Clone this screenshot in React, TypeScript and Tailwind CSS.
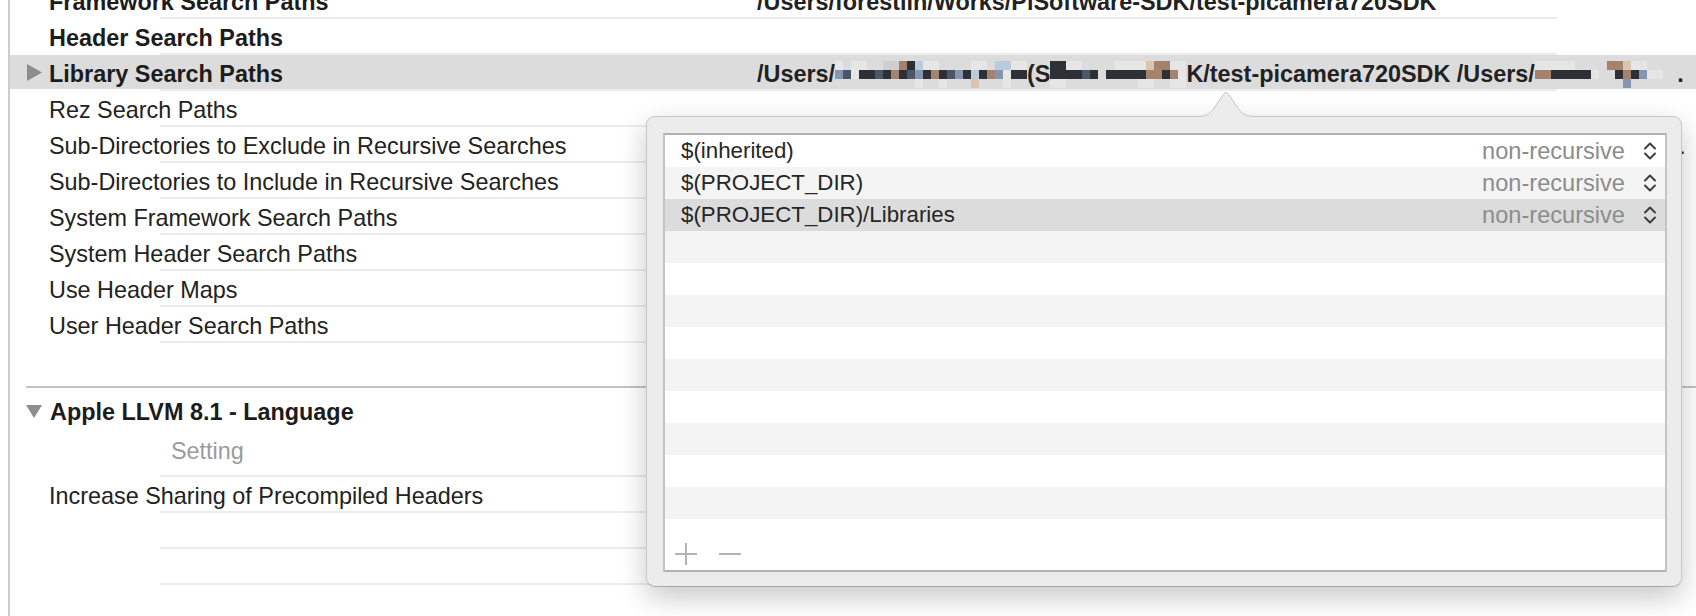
import React from "react";

const FONT = "font-['Liberation_Sans',Arial,sans-serif]";

// pixelated blur cells
const TONE: Record<string, string> = {
  d: "bg-[#2e3038]",
  n: "bg-[#4c5669]",
  b: "bg-[#8496b0]",
  s: "bg-[#bccbdb]",
  t: "bg-[#a4826c]",
  p: "bg-[#d8c6b0]",
  w: "bg-[#e6e6e6]",
  g: "bg-[#cfcfcf]",
  ".": "bg-transparent",
};

const Mosaic = ({ rows }: { rows: string[] }) => (
  <span className="flex flex-col">
    {rows.map((r, i) => (
      <span key={i} className="flex">
        {r.split("").map((c, j) => (
          <span key={j} className={`h-[9px] w-[8px] ${TONE[c]}`} />
        ))}
      </span>
    ))}
  </span>
);

const TriRight = () => (
  <svg width="15" height="17" viewBox="0 0 15 17">
    <polygon points="0,0 15,8.5 0,17" fill="#8d8d8d" />
  </svg>
);

const TriDown = () => (
  <svg width="16" height="13" viewBox="0 0 16 13">
    <polygon points="0,0 16,0 8,13" fill="#8d8d8d" />
  </svg>
);

const Line = () => <div className="ml-[150px] h-[2px] w-[1397px] bg-[#ececec]" />;

type RowProps = {
  label?: string;
  bold?: boolean;
  arrow?: boolean;
  selected?: boolean;
  value?: React.ReactNode;
};

const Row = ({ label = "", bold, arrow, selected, value }: RowProps) => (
  <div>
    <div className={`flex h-[34px] items-center pt-[4px] ${selected ? "bg-[#dcdcdc]" : ""}`}>
      <div className="flex w-[747px] shrink-0 items-center pl-[17px]">
        <span className="mr-[7px] flex w-[15px] -translate-y-[2px]">{arrow && <TriRight />}</span>
        <span className={bold ? "font-bold text-[#1c1c1c]" : ""}>{label}</span>
      </div>
      <div className="min-w-0 flex-1 overflow-hidden whitespace-nowrap">{value}</div>
    </div>
    <Line />
  </div>
);

const Stepper = () => (
  <svg width="14" height="22" viewBox="0 0 14 22" fill="none" stroke="#3a3a3a" strokeWidth="1.9" strokeLinecap="round" strokeLinejoin="round">
    <path d="M2 8.5 L7 3.5 L12 8.5" />
    <path d="M2 13.5 L7 18.5 L12 13.5" />
  </svg>
);

const paths = ["$(inherited)", "$(PROJECT_DIR)", "$(PROJECT_DIR)/Libraries"];

const PathRow = ({ i }: { i: number }) => {
  const text = paths[i];
  const bg = i === 2 ? "bg-[#dcdcdc]" : i % 2 === 1 ? "bg-[#f4f4f4]" : "bg-white";
  return (
    <div className={`flex h-[32px] shrink-0 items-center pl-[16px] pr-[8px] ${bg}`}>
      <span className="flex-1 text-[22.3px] text-[#262626]">{text}</span>
      {text && (
        <>
          <span className="text-[23.6px] text-[#8c8c8c]">non-recursive</span>
          <span className="ml-[18px] flex">
            <Stepper />
          </span>
        </>
      )}
    </div>
  );
};

export default function App() {
  return (
    <div className={`relative h-[616px] w-[1696px] overflow-hidden bg-white text-[23.4px] leading-[28px] text-[#222] ${FONT}`}>
      <div className="h-full pl-[8px]">
        <div className="flow-root h-full border-l-2 border-[#cccccc]">
          <div className="-mt-[17px]">
            <Row
              label="Framework Search Paths"
              bold
              value={<span className="font-bold">/Users/forestlin/Works/PiSoftware-SDK/test-picamera720SDK</span>}
            />
            <Row label="Header Search Paths" bold />
            <Row
              label="Library Search Paths"
              bold
              arrow
              selected
              value={
                <span className="flex items-center font-bold">
                  <span>/Users/</span>
                  <Mosaic
                    rows={[
                      "w.ww..ggtdsww....ww.ssww",
                      "bnwddndtdnbdtdnbdsdtbwdd",
                      "..........w..w...p...w..",
                    ]}
                  />
                  <span>(S</span>
                  <Mosaic rows={["ddww....wwwwpttww", "ddddnd.dddddttdtw", "ww.........ww..ww"]} />
                  <span>K/test-picamera720SDK /Users/</span>
                  <Mosaic rows={["wwwww....ttpww...", "ttdddddw..dtdbww.", "...........b....."]} />
                  <span>&nbsp;.</span>
                </span>
              }
            />
            <Row label="Rez Search Paths" />
            <Row
              label="Sub-Directories to Exclude in Recursive Searches"
              value={
                <span className="block truncate">
                  *.nib *.lproj *.framework *.gch *.xcode* *.xcassets (*) .DS_Store CVS .svn .git .hg *.pbproj *.pbxproj
                </span>
              }
            />
            <Row label="Sub-Directories to Include in Recursive Searches" />
            <Row label="System Framework Search Paths" />
            <Row label="System Header Search Paths" />
            <Row label="Use Header Maps" />
            <Row label="User Header Search Paths" />
          </div>

          <div className="h-[43px]" />
          <div className="ml-[16px] h-[2px] bg-[#c3c3c3]" />

          <div className="flex h-[45px] items-center pl-[16px] pt-[2px]">
            <TriDown />
            <span className="ml-[8px] font-bold text-[#1c1c1c]">Apple LLVM 8.1 - Language</span>
          </div>
          <div>
            <div className="flex h-[42px] items-center pb-[6px] pl-[161px] text-[#9b9b9b]">Setting</div>
            <Line />
          </div>
          <Row label="Increase Sharing of Precompiled Headers" />
          <Row />
          <Row />
          <Row />
        </div>
      </div>

      {/* popover */}
      <div className="absolute left-[646px] top-[116px] h-[471px] w-[1036px] rounded-[9px] border border-[#c6c6c6] border-b-[#a8a8a8] bg-[#ececec] pb-[14px] pl-[16px] pr-[14px] pt-[16px] shadow-[0_10px_28px_rgba(0,0,0,0.22)]">
        <svg className="absolute -top-[27px] left-[549px]" width="60" height="28" viewBox="0 0 60 28">
          <path
            d="M0,26.5 C9,26.5 13,25 17,19.5 L28,3.5 Q30,0.8 32,3.5 L43,19.5 C47,25 51,26.5 60,26.5 L60,28 L0,28 Z"
            fill="#ececec"
          />
          <path
            d="M0,26.5 C9,26.5 13,25 17,19.5 L28,3.5 Q30,0.8 32,3.5 L43,19.5 C47,25 51,26.5 60,26.5"
            fill="none"
            stroke="#c6c6c6"
            strokeWidth="1"
          />
        </svg>
        <div className="flex h-full flex-col border-2 border-[#c4c4c4] border-b-[#b2b2b2] border-t-[#b2b2b2] bg-white">
          {Array.from({ length: 12 }, (_, i) => (
            <PathRow key={i} i={i} />
          ))}
          <div className="flex flex-1 items-end gap-[22px] pb-[5px] pl-[10px]">
            <svg width="22" height="22" viewBox="0 0 22 22">
              <path d="M11 0V22M0 11H22" stroke="#b3b3b3" strokeWidth="2" />
            </svg>
            <svg width="22" height="22" viewBox="0 0 22 22">
              <path d="M0 11H22" stroke="#b3b3b3" strokeWidth="2" />
            </svg>
          </div>
        </div>
      </div>
    </div>
  );
}
